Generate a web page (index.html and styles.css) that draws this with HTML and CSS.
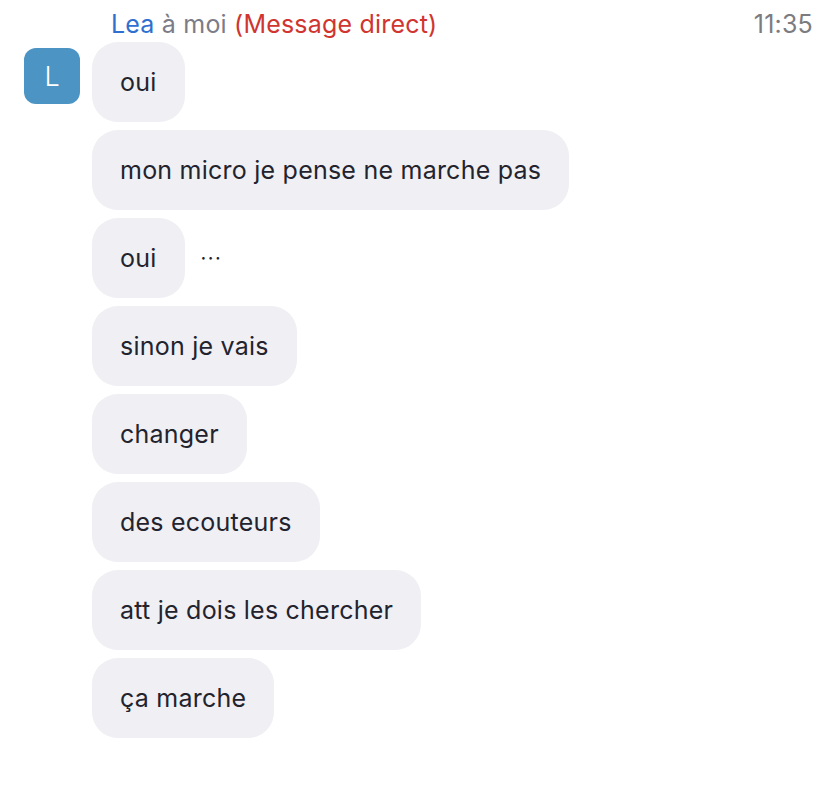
FILE: index.html
```html
<!DOCTYPE html>
<html lang="fr">
<head>
<meta charset="utf-8">
<link rel="stylesheet" href="styles.css">
</head>
<body>
<div class="chat">
  <div class="header">
    <div class="who"><span class="name">Lea</span> à moi <span class="direct">(Message direct)</span></div>
    <div class="time">11:35</div>
  </div>
  <div class="body">
    <div class="avatar">L</div>
    <div class="messages">
      <div class="row"><div class="bubble">oui</div></div>
      <div class="row"><div class="bubble">mon micro je pense ne marche pas</div></div>
      <div class="row"><div class="bubble">oui</div><div class="more">···</div></div>
      <div class="row"><div class="bubble">sinon je vais</div></div>
      <div class="row"><div class="bubble">changer</div></div>
      <div class="row"><div class="bubble">des ecouteurs</div></div>
      <div class="row"><div class="bubble">att je dois les chercher</div></div>
      <div class="row"><div class="bubble">ça marche</div></div>
    </div>
  </div>
</div>
</body>
</html>
```

FILE: styles.css
```css
html, body {
  margin: 0;
  padding: 0;
  background: #ffffff;
}
body {
  font-family: Inter, "Noto Sans", sans-serif;
  width: 834px;
  height: 808px;
  overflow: hidden;
}
.chat {
  padding: 6px 21px 0 24px;
}
.header {
  display: flex;
  justify-content: space-between;
  align-items: baseline;
  padding-left: 87px;
  height: 36px;
  font-size: 25px;
  line-height: 36px;
  letter-spacing: 0.2px;
}
.who {
  color: #7c7c86;
}
.name {
  color: #2f6fd0;
}
.direct {
  color: #d0352f;
}
.time {
  color: #7c7c80;
}
.body {
  display: flex;
  gap: 12px;
  align-items: flex-start;
}
.avatar {
  width: 56px;
  height: 56px;
  border-radius: 12px;
  background: #4b94c4;
  color: #ffffff;
  font-size: 27px;
  font-weight: 300;
  display: flex;
  align-items: center;
  justify-content: center;
  margin-top: 6px;
}
.messages {
  display: flex;
  flex-direction: column;
  gap: 8px;
}
.row {
  display: flex;
  align-items: center;
  gap: 16px;
}
.bubble {
  background: #efeff4;
  color: #23232e;
  border-radius: 26px;
  height: 80px;
  box-sizing: border-box;
  padding: 0 28px;
  display: flex;
  align-items: center;
  font-size: 25px;
  letter-spacing: 0.23px;
}
.more {
  color: #23232e;
  font-size: 20px;
  letter-spacing: 1.5px;
}
```
